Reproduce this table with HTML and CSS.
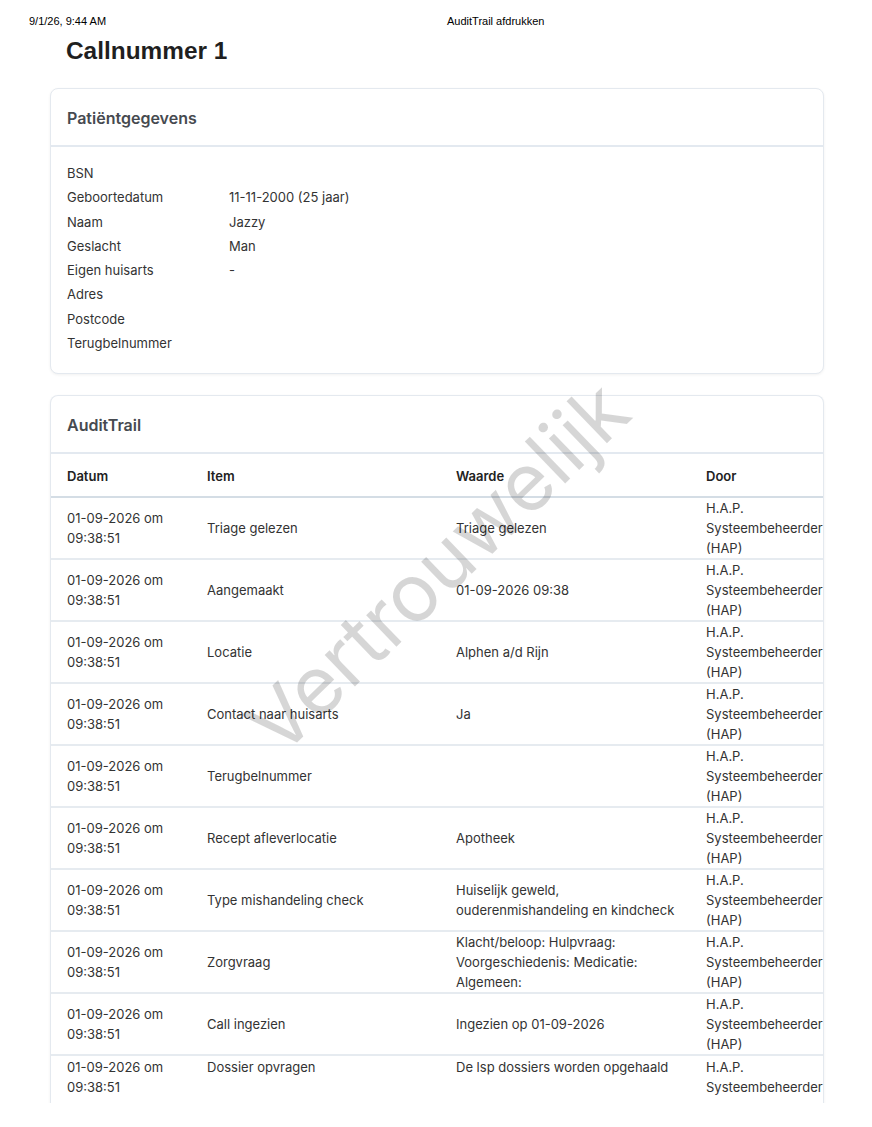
FILE: index.html
```html
<!DOCTYPE html>
<html lang="nl">
<head>
<meta charset="utf-8">
<title>AuditTrail afdrukken</title>
<link rel="stylesheet" href="styles.css">
</head>
<body>
<div class="page">
  <header class="print-header">
    <span class="print-date">9/1/26, 9:44 AM</span>
    <span class="print-title">AuditTrail afdrukken</span>
  </header>

  <h1 class="page-title">Callnummer 1</h1>

  <section class="card">
    <div class="card-header">Patiëntgegevens</div>
    <div class="card-body">
      <dl class="details">
        <dt>BSN</dt><dd></dd>
        <dt>Geboortedatum</dt><dd>11-11-2000 (25 jaar)</dd>
        <dt>Naam</dt><dd>Jazzy</dd>
        <dt>Geslacht</dt><dd>Man</dd>
        <dt>Eigen huisarts</dt><dd>-</dd>
        <dt>Adres</dt><dd></dd>
        <dt>Postcode</dt><dd></dd>
        <dt>Terugbelnummer</dt><dd></dd>
      </dl>
    </div>
  </section>

  <section class="card card-audit">
    <div class="card-header">AuditTrail</div>
    <table class="audit">
      <colgroup>
        <col class="c-datum"><col class="c-item"><col class="c-waarde"><col class="c-door">
      </colgroup>
      <thead>
        <tr><th>Datum</th><th>Item</th><th>Waarde</th><th>Door</th></tr>
      </thead>
      <tbody>
        <tr><td>01-09-2026 om 09:38:51</td><td>Triage gelezen</td><td>Triage gelezen</td><td>H.A.P. Systeembeheerder (HAP)</td></tr>
        <tr><td>01-09-2026 om 09:38:51</td><td>Aangemaakt</td><td>01-09-2026 09:38</td><td>H.A.P. Systeembeheerder (HAP)</td></tr>
        <tr><td>01-09-2026 om 09:38:51</td><td>Locatie</td><td>Alphen a/d Rijn</td><td>H.A.P. Systeembeheerder (HAP)</td></tr>
        <tr><td>01-09-2026 om 09:38:51</td><td>Contact naar huisarts</td><td>Ja</td><td>H.A.P. Systeembeheerder (HAP)</td></tr>
        <tr><td>01-09-2026 om 09:38:51</td><td>Terugbelnummer</td><td></td><td>H.A.P. Systeembeheerder (HAP)</td></tr>
        <tr><td>01-09-2026 om 09:38:51</td><td>Recept afleverlocatie</td><td>Apotheek</td><td>H.A.P. Systeembeheerder (HAP)</td></tr>
        <tr><td>01-09-2026 om 09:38:51</td><td>Type mishandeling check</td><td>Huiselijk geweld, ouderenmishandeling en kindcheck</td><td>H.A.P. Systeembeheerder (HAP)</td></tr>
        <tr><td>01-09-2026 om 09:38:51</td><td>Zorgvraag</td><td>Klacht/beloop: Hulpvraag: Voorgeschiedenis: Medicatie: Algemeen:</td><td>H.A.P. Systeembeheerder (HAP)</td></tr>
        <tr><td>01-09-2026 om 09:38:51</td><td>Call ingezien</td><td>Ingezien op 01-09-2026</td><td>H.A.P. Systeembeheerder (HAP)</td></tr>
        <tr class="row-split"><td>01-09-2026 om 09:38:51</td><td>Dossier opvragen</td><td>De lsp dossiers worden opgehaald</td><td>H.A.P. Systeembeheerder</td></tr>
      </tbody>
    </table>
  </section>

  <div class="watermark">Vertrouwelijk</div>
</div>
</body>
</html>
```

FILE: styles.css
```css
* { box-sizing: border-box; }

html, body {
  margin: 0;
  padding: 0;
  background: #ffffff;
}

body {
  font-family: Inter, "Noto Sans", sans-serif;
  font-size: 13px;
  color: #333333;
}

.page {
  position: relative;
  height: 1103px;
  overflow: hidden;
}

.print-header {
  display: flex;
  padding: 15px 0 0 29px;
  font-family: "Liberation Sans", Arial, sans-serif;
  font-size: 11px;
  line-height: 13px;
  color: #000000;
}

.print-date {
  width: 418px;
}

.page-title {
  margin: 8px 0 0 66px;
  font-family: "Liberation Sans", Arial, sans-serif;
  font-size: 24.4px;
  font-weight: 700;
  line-height: 30px;
  color: #1f1f1f;
}

.card {
  width: 774px;
  margin: 22px 0 0 50px;
  border: 1px solid #e4e9ef;
  border-radius: 8px;
  box-shadow: 0 1px 3px rgba(0, 0, 0, 0.06);
  background: #ffffff;
  overflow: hidden;
}

.card + .card {
  margin-top: 21px;
}

.card-header {
  padding: 17px 16px 15px;
  font-size: 16px;
  font-weight: 600;
  line-height: 24px;
  color: #464a50;
  border-bottom: 2px solid #e3e9f0;
}

.card-body {
  padding: 14px 16px 18px;
}

.details {
  display: grid;
  grid-template-columns: 162px 1fr;
  margin: 0;
  line-height: 24.3px;
  color: #333333;
}

.details dt,
.details dd {
  margin: 0;
  min-height: 24.3px;
}

.card-audit {
  border-bottom: none;
  border-bottom-left-radius: 0;
  border-bottom-right-radius: 0;
}

.audit {
  table-layout: fixed;
  width: 805px;
  border-collapse: collapse;
  line-height: 20px;
}

.c-datum { width: 140px; }
.c-item { width: 249px; }
.c-waarde { width: 250px; }
.c-door { width: 166px; }

.audit th {
  text-align: left;
  font-weight: 600;
  color: #222222;
  padding: 12px 8px 10px 16px;
  border-bottom: 2px solid #d4dde5;
}

.audit td {
  padding: 0 8px 0 16px;
  vertical-align: middle;
  color: #333333;
  border-bottom: 2px solid #e6ebf0;
}

.audit .row-split td {
  vertical-align: top;
  padding-top: 1px;
  padding-bottom: 20px;
  border-bottom: none;
}

.watermark {
  position: absolute;
  left: 437px;
  top: 567px;
  transform: translate(-50%, -50%) rotate(-44deg);
  font-family: Inter, "Noto Sans", sans-serif;
  font-size: 80px;
  font-weight: 400;
  line-height: 1;
  color: rgba(0, 0, 0, 0.16);
  white-space: nowrap;
  pointer-events: none;
}
```
